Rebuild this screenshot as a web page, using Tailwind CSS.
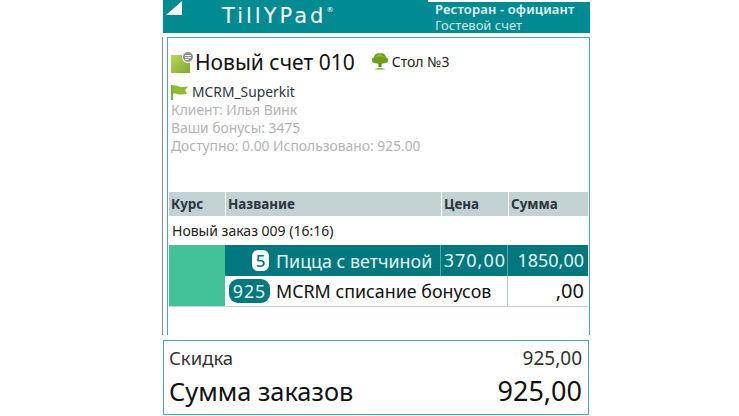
<!DOCTYPE html>
<html lang="en">
<head>
    <meta charset="UTF-8">
    <title>Tillypad</title>
    <script src="https://cdn.jsdelivr.net/npm/@tailwindcss/browser@4"></script>
</head>
<body class="bg-white overflow-hidden h-[416px] font-['Noto_Sans','Open_Sans',sans-serif]">
    <div class="ml-[162px] w-[428px] h-[416px] flex flex-col">
        <!-- Header -->
        <div class="h-[33px] flex shrink-0 ml-px">
            <div class="w-[265px] bg-[#008b92] relative pl-[59px]">
                <svg class="absolute left-[3px] top-[1px]" width="16" height="14" viewBox="0 0 16 14"><path d="M0 14 L16 0 V14 Z" fill="#fff"/></svg>
                <div class="text-white text-[21px] leading-[33px] font-['DejaVu_Sans',sans-serif] tracking-[3px]">TillYPad<span class="text-[7px] align-top leading-[20px] tracking-normal">®</span></div>
            </div>
            <div class="flex-1 mt-[2px] bg-[#008b92] text-white pl-[7px] text-[13px] leading-[15px]">
                <div class="font-semibold text-[#e3f3f3] tracking-[0.15px]">Ресторан - официант</div>
                <div class="mt-[1px] text-[13px] text-[#cfe8e8]">Гостевой счет</div>
            </div>
        </div>

        <!-- Check -->
        <div class="mt-[4px] flex h-[298px] shrink-0 border-l border-[#8a8a8a]">
            <div class="ml-[4px] w-[423px] border border-b-0 border-[#4aa9ae] pt-[9px] relative">
                <div class="flex items-center h-[30px] pl-[3px]">
                    <svg class="shrink-0" width="24" height="22" viewBox="0 0 24 22">
                        <defs>
                            <linearGradient id="note" x1="0" y1="0" x2="1" y2="1">
                                <stop offset="0" stop-color="#bcd85c"/>
                                <stop offset="1" stop-color="#7ea82c"/>
                            </linearGradient>
                        </defs>
                        <rect x="0" y="4" width="19" height="18" fill="url(#note)"/>
                        <circle cx="17" cy="6" r="6" fill="#fff"/>
                        <circle cx="17" cy="6" r="5" fill="#8f8f8f"/>
                        <path d="M14 4.500H20M14 6.500H20M14 8.500H18" stroke="#fff" stroke-width="1"/>
                    </svg>
                    <span class="ml-0 text-[21px] leading-[30px] text-[#111]">Новый счет 010</span>
                    <svg class="ml-[16px] mb-[3px] shrink-0" width="18" height="18" viewBox="0 0 18 18">
                        <path d="M3 11 C0 10 0 6 3 5.500 C3 2 7 0.500 9 1.500 C12 0.500 15 2.500 15 5.500 C18 6 18 10 15 11 C12 12 6 12 3 11 Z" fill="#6f9f1e"/>
                        <path d="M4 5 C6 2.500 11 2.500 14 5 C11 4 7 4 4 5 Z" fill="#a3cf3e"/>
                        <path d="M7.500 11 H10.500 L10.500 15 H7.500 Z" fill="#5a8a18"/>
                        <path d="M4 17.500 C5 15.500 13 15.500 14 17.500 Z" fill="#7aa824"/>
                    </svg>
                    <span class="ml-[3px] text-[14px] text-[#222] mb-[1px]">Стол №3</span>
                </div>
                <div class="mt-[6px] pl-[3px] text-[13.85px] leading-[18px] text-[#b3b3b3]">
                    <div class="flex items-center text-[#2b3440]">
                        <svg class="mr-[4px] shrink-0" width="17" height="15" viewBox="0 0 17 15">
                            <rect x="0" y="0" width="2" height="15" fill="#7fb02e"/>
                            <path d="M2 0.500 C6 -0.500 8 2.500 11 2 L17 1.500 L14 5 L16 9 L10 9.500 C7 10 5 7.500 2 9 Z" fill="#8cbb2f"/>
                        </svg>
                        MCRM_Superkit
                    </div>
                    <div>Клиент: Илья Винк</div>
                    <div>Ваши бонусы: 3475</div>
                    <div>Доступно: 0.00 Использовано: 925.00</div>
                </div>

                <!-- Table -->
                <div class="mt-[37px] mx-px text-[13.4px]">
                    <div class="grid grid-cols-[56px_215px_66px_1fr] gap-x-px h-[24px] leading-[24px] font-bold text-[#2b3440]">
                        <div class="bg-[#c2d2d2] pl-[2px]">Курс</div>
                        <div class="bg-[#c2d2d2] pl-[2px]">Название</div>
                        <div class="bg-[#c2d2d2] pl-[2px]">Цена</div>
                        <div class="bg-[#c2d2d2] pl-[2px]">Сумма</div>
                    </div>
                    <div class="h-[29px] leading-[29px] pl-[3px] text-[14px] text-[#222]">Новый заказ 009 (16:16)</div>
                    <div class="grid grid-cols-[56px_1fr] border-b border-[#c8d4d4]">
                        <div class="bg-[#43c19b]"></div>
                        <div class="text-[17.85px]">
                            <div class="grid grid-cols-[215px_66px_1fr] gap-x-px h-[31px] bg-[#52a5a8] text-[#e4f4f4] leading-[30px]">
                                <div class="bg-[#00787e] flex items-center pl-[27px]">
                                    <span class="w-[17px] h-[21px] rounded-[6px] bg-white text-[#00787e] flex items-center justify-center text-[17px] font-medium">5</span>
                                    <span class="ml-[7px]">Пицца с ветчиной</span>
                                </div>
                                <div class="bg-[#00787e] text-right pr-[1px] tracking-[1px] text-[18px]">370,00</div>
                                <div class="bg-[#00787e] text-right pr-[4px] text-[18px]">1850,00</div>
                            </div>
                            <div class="grid grid-cols-[283px_1fr] h-[30px] leading-[30px] text-[#111]">
                                <div class="flex items-center pl-[4px] border-r border-[#b6c6c6]">
                                    <span class="w-[41px] h-[24px] rounded-[9px] bg-[#00787e] text-[#e4f4f4] flex items-center justify-center tracking-[1px]">925</span>
                                    <span class="ml-[6px]">MCRM списание бонусов</span>
                                </div>
                                <div class="text-right pr-[4px] text-[20px]">,00</div>
                            </div>
                        </div>
                    </div>
                </div>
            </div>
        </div>

        <!-- Totals -->
        <div class="mt-[5px] ml-px w-[426px] h-[75px] border border-[#4aa9ae] pl-[5px] pr-[6px] pt-[4px] text-[#111]">
            <div class="flex justify-between text-[18.5px] leading-[26px] text-[#333]">
                <span>Скидка</span><span class="text-[19px]">925,00</span>
            </div>
            <div class="flex justify-between items-center h-[38px] mt-[1px]">
                <span class="text-[25.4px]">Сумма заказов</span><span class="text-[27px]">925,00</span>
            </div>
        </div>
    </div>
</body>
</html>
